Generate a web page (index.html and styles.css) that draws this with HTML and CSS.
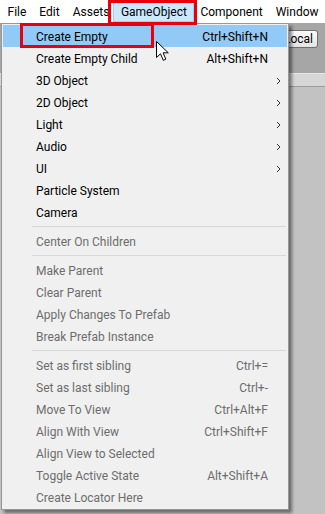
FILE: index.html
```html
<!DOCTYPE html>
<html lang="en">
<head>
    <meta charset="UTF-8">
    <meta name="viewport" content="width=device-width, initial-scale=1.0">
    <title>GameObject menu</title>
    <link rel="stylesheet" href="styles.css">
</head>
<body>
    <div class="menubar">
        <span class="menubar-item">File</span>
        <span class="menubar-item">Edit</span>
        <span class="menubar-item">Assets</span>
        <span class="menubar-item active">GameObject</span>
        <span class="menubar-item">Component</span>
        <span class="menubar-item">Window</span>
    </div>

    <div class="workspace">
        <div class="toolbar">
            <button class="toolbar-btn">Local</button>
        </div>
        <div class="strip"></div>
        <div class="panel"></div>
    </div>

    <div class="dropdown">
        <div class="menu-item hover"><span class="label">Create Empty</span><span class="shortcut">Ctrl+Shift+N</span><span class="sub"></span></div>
        <div class="menu-item"><span class="label">Create Empty Child</span><span class="shortcut">Alt+Shift+N</span><span class="sub"></span></div>
        <div class="menu-item"><span class="label">3D Object</span><span class="sub"><svg width="5" height="8" viewBox="0 0 5 8"><path d="M1 1 L4 4 L1 7" fill="none" stroke="#333" stroke-width="1"/></svg></span></div>
        <div class="menu-item"><span class="label">2D Object</span><span class="sub"><svg width="5" height="8" viewBox="0 0 5 8"><path d="M1 1 L4 4 L1 7" fill="none" stroke="#333" stroke-width="1"/></svg></span></div>
        <div class="menu-item"><span class="label">Light</span><span class="sub"><svg width="5" height="8" viewBox="0 0 5 8"><path d="M1 1 L4 4 L1 7" fill="none" stroke="#333" stroke-width="1"/></svg></span></div>
        <div class="menu-item"><span class="label">Audio</span><span class="sub"><svg width="5" height="8" viewBox="0 0 5 8"><path d="M1 1 L4 4 L1 7" fill="none" stroke="#333" stroke-width="1"/></svg></span></div>
        <div class="menu-item"><span class="label">UI</span><span class="sub"><svg width="5" height="8" viewBox="0 0 5 8"><path d="M1 1 L4 4 L1 7" fill="none" stroke="#333" stroke-width="1"/></svg></span></div>
        <div class="menu-item"><span class="label">Particle System</span><span class="sub"></span></div>
        <div class="menu-item"><span class="label">Camera</span><span class="sub"></span></div>
        <div class="separator"></div>
        <div class="menu-item disabled"><span class="label">Center On Children</span><span class="sub"></span></div>
        <div class="separator"></div>
        <div class="menu-item disabled"><span class="label">Make Parent</span><span class="sub"></span></div>
        <div class="menu-item disabled"><span class="label">Clear Parent</span><span class="sub"></span></div>
        <div class="menu-item disabled"><span class="label">Apply Changes To Prefab</span><span class="sub"></span></div>
        <div class="menu-item disabled"><span class="label">Break Prefab Instance</span><span class="sub"></span></div>
        <div class="separator"></div>
        <div class="menu-item disabled"><span class="label">Set as first sibling</span><span class="shortcut">Ctrl+=</span><span class="sub"></span></div>
        <div class="menu-item disabled"><span class="label">Set as last sibling</span><span class="shortcut">Ctrl+-</span><span class="sub"></span></div>
        <div class="menu-item disabled"><span class="label">Move To View</span><span class="shortcut">Ctrl+Alt+F</span><span class="sub"></span></div>
        <div class="menu-item disabled"><span class="label">Align With View</span><span class="shortcut">Ctrl+Shift+F</span><span class="sub"></span></div>
        <div class="menu-item disabled"><span class="label">Align View to Selected</span><span class="sub"></span></div>
        <div class="menu-item disabled"><span class="label">Toggle Active State</span><span class="shortcut">Alt+Shift+A</span><span class="sub"></span></div>
        <div class="menu-item disabled"><span class="label">Create Locator Here</span><span class="sub"></span></div>
    </div>

    <!-- red annotation boxes -->
    <div class="callout callout-menu"></div>
    <div class="callout callout-item"></div>

    <svg class="cursor" width="14" height="21" viewBox="0 0 14 21">
        <path d="M0.5 0.5 L0.5 16.5 L4.5 12.8 L7.3 19.3 L9.8 18.2 L7.1 11.8 L12.3 11.8 Z" fill="#fff" stroke="#000" stroke-width="1" stroke-linejoin="miter"/>
    </svg>
</body>
</html>
```

FILE: styles.css
```css
body {
    margin: 0;
    padding: 0;
    width: 325px;
    height: 514px;
    overflow: hidden;
    position: relative;
    font-family: Roboto, "Noto Sans", sans-serif;
    font-size: 12px;
    color: #000;
    background: #c2c2c2;
}

.menubar {
    height: 23px;
    display: flex;
    align-items: center;
    background: #fff;
    padding-left: 1px;
    box-sizing: border-box;
    white-space: nowrap;
}

.menubar-item {
    height: 20px;
    line-height: 19px;
    padding: 0 5.5px;
    box-sizing: border-box;
    border: 1px solid transparent;
}

.menubar-item.active {
    background: #cce8ff;
    border-color: #99d1ff;
    padding: 0 6px 0 7px;
    margin-left: -3px;
}

.workspace {
    display: flex;
    flex-direction: column;
}

.toolbar {
    height: 50px;
    background: #a6a6a6;
    display: flex;
    justify-content: flex-end;
    align-items: flex-start;
    padding: 7px 7px 0 0;
    box-sizing: border-box;
}

.toolbar-btn {
    height: 18px;
    width: 40px;
    padding: 0 4px;
    font-family: inherit;
    font-size: 12px;
    line-height: 14px;
    text-align: right;
    border: 1px solid #6f6f6f;
    border-radius: 3px;
    background: linear-gradient(#fbfbfb, #e4e4e4);
}

.strip {
    height: 12px;
    background: #d6d6d6;
    border-top: 1px solid #e8e8e8;
    border-bottom: 1px solid #9c9c9c;
}

.panel {
    flex: 1;
    background: #c2c2c2;
}

.dropdown {
    position: absolute;
    left: 1px;
    top: 23px;
    width: 288px;
    box-sizing: border-box;
    padding: 1px;
    background: #f0f0f0;
    border: 1px solid #979797;
    box-shadow: 3px 3px 3px rgba(0, 0, 0, 0.45);
}

.menu-item {
    height: 22px;
    box-sizing: border-box;
    display: flex;
    align-items: center;
    padding-left: 33px;
    padding-top: 1px;
}

.menu-item.hover {
    background: #91c9f7;
}

.menu-item.disabled {
    color: #6d6d6d;
}

.menu-item .label {
    flex: 1;
    white-space: nowrap;
}

.menu-item .shortcut {
    white-space: nowrap;
}

.menu-item .sub {
    width: 18px;
    display: flex;
    justify-content: center;
    padding-left: 1px;
}

.separator {
    height: 7px;
    margin-left: 29px;
    margin-right: 1px;
    display: flex;
    align-items: center;
}

.separator::before {
    content: "";
    display: block;
    width: 100%;
    height: 1px;
    background: #d7d7d7;
}

.callout {
    position: absolute;
    border: 3px solid #e8000f;
    box-sizing: border-box;
}

.callout-menu {
    left: 108px;
    top: 0;
    width: 89px;
    height: 25px;
}

.callout-item {
    left: 20px;
    top: 23px;
    width: 134px;
    height: 25px;
}

.cursor {
    position: absolute;
    left: 156px;
    top: 41px;
}
```
